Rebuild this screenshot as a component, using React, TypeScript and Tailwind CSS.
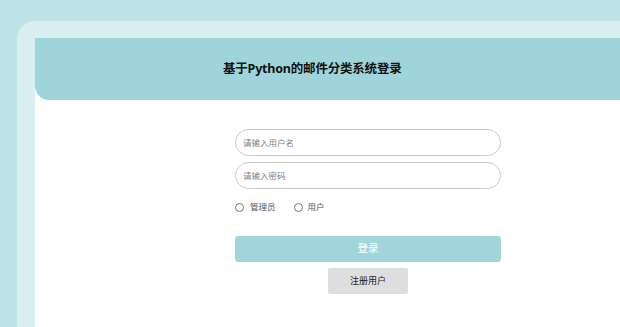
export default function App() {
  return (
    <div
      className="h-[327px] w-full overflow-hidden bg-[#bde3e8] pl-[17px] pt-[21px]"
      style={{ fontFamily: '"Noto Sans", "Noto Sans CJK SC", sans-serif' }}
    >
      <div className="h-full rounded-tl-[18px] bg-[#d8eef1] pl-[18px] pt-[17px]">
        <div className="flex h-full flex-col bg-white">
          {/* header */}
          <div className="flex h-[62px] items-center rounded-bl-[14px] bg-[#9fd5da] pl-[188px]">
            <h1 className="text-[12.5px] font-bold tracking-[-0.2px] text-[#111]">
              基于Python的邮件分类系统登录
            </h1>
          </div>

          {/* form */}
          <div className="ml-[200px] mt-[29px] flex w-[266px] flex-col">
            <input
              placeholder="请输入用户名"
              className="h-[27px] rounded-full border border-[#c8c8c8] px-[7px] text-[8.5px] text-[#333] outline-none placeholder:text-[#808080]"
            />
            <input
              type="password"
              placeholder="请输入密码"
              className="mt-[6px] h-[27px] rounded-full border border-[#c8c8c8] px-[7px] text-[8.5px] text-[#333] outline-none placeholder:text-[#808080]"
            />
            <div className="mt-[12px] flex items-center text-[8.5px] text-[#555]">
              <span className="h-[9px] w-[9px] rounded-full border border-[#777]" />
              <span className="ml-[6px]">管理员</span>
              <span className="ml-[18px] h-[9px] w-[9px] rounded-full border border-[#777]" />
              <span className="ml-[5px]">用户</span>
            </div>
            <button className="mt-[22px] h-[26px] rounded-[3px] bg-[#a0d6db] text-[10.5px] text-white">
              登录
            </button>
            <button className="mx-auto mt-[6px] h-[26px] w-[80px] rounded-[2px] bg-[#dedede] text-[9px] text-[#222]">
              注册用户
            </button>
          </div>
        </div>
      </div>
    </div>
  )
}
